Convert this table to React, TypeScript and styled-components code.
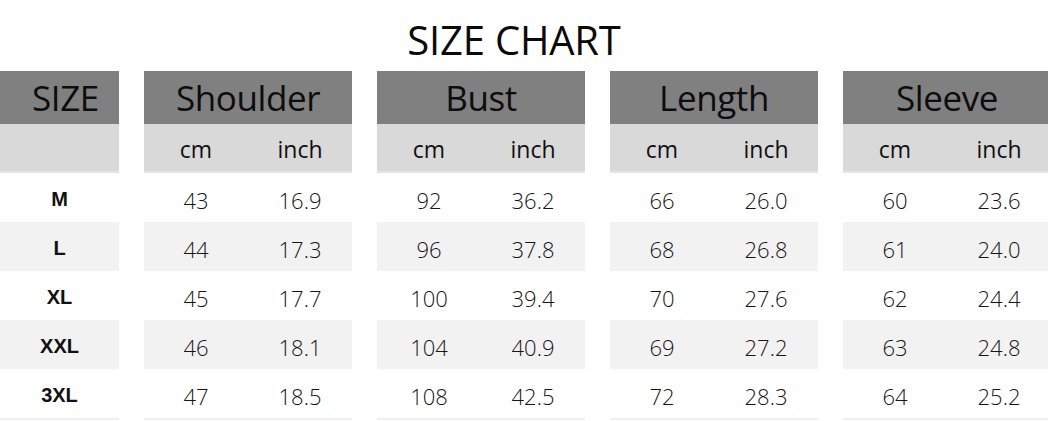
import { createGlobalStyle } from "styled-components";
import styled from "styled-components";

const GlobalStyle = createGlobalStyle`
  html, body {
    margin: 0;
    padding: 0;
    background: #ffffff;
  }
  body {
    font-family: "Open Sans", "Noto Sans", sans-serif;
    color: #111111;
  }
`;

const Page = styled.div`
  width: 1048px;
  height: 421px;
  overflow: hidden;
  background: #fff;
`;

const Title = styled.h1`
  margin: 0;
  height: 71px;
  box-sizing: border-box;
  padding: 14px 20px 0 0;
  text-align: center;
  font-size: 40px;
  font-weight: 400;
  line-height: 52px;
  color: #0a0a0a;
  letter-spacing: -0.2px;
`;

const Table = styled.div`
  display: flex;
  gap: 25px;
`;

const Group = styled.div<{ $width: number }>`
  flex: 0 0 ${({ $width }) => $width}px;
  display: flex;
  flex-direction: column;
`;

const HeadCell = styled.div<{ $shift?: number }>`
  height: 53px;
  background: #808080;
  display: flex;
  align-items: center;
  justify-content: center;
  padding-left: ${({ $shift }) => $shift ?? 0}px;
  font-size: 35px;
  font-weight: 400;
  color: #0d0d0d;
  letter-spacing: -0.4px;
`;

const Row = styled.div<{ $tone: "sub" | "white" | "light" }>`
  height: 49px;
  box-sizing: border-box;
  display: grid;
  grid-template-columns: 1fr 1fr;
  align-items: center;
  padding-top: ${({ $tone }) => ($tone === "sub" ? 2 : 4)}px;
  background: ${({ $tone }) =>
    $tone === "sub" ? "#d9d9d9" : $tone === "light" ? "#f2f2f2" : "#ffffff"};
  border-bottom: ${({ $tone }) => ($tone === "sub" ? "2px solid #e4e4e4" : "none")};
`;

const SizeRow = styled(Row)`
  grid-template-columns: 1fr;
`;

const Unit = styled.span`
  text-align: center;
  font-size: 23px;
  font-weight: 400;
  color: #111;
`;

const Value = styled.span`
  text-align: center;
  font-size: 22px;
  font-weight: 300;
  color: #151515;
`;

const SizeLabel = styled.span`
  text-align: center;
  font-family: "Liberation Sans", Arial, sans-serif;
  font-weight: 700;
  font-size: 20px;
  color: #111;
`;

const BottomLine = styled.div`
  height: 2px;
  background: #f0f0f0;
`;

const sizes = ["M", "L", "XL", "XXL", "3XL"];

const measures: { name: string; cm: string[]; inch: string[] }[] = [
  { name: "Shoulder", cm: ["43", "44", "45", "46", "47"], inch: ["16.9", "17.3", "17.7", "18.1", "18.5"] },
  { name: "Bust", cm: ["92", "96", "100", "104", "108"], inch: ["36.2", "37.8", "39.4", "40.9", "42.5"] },
  { name: "Length", cm: ["66", "68", "70", "69", "72"], inch: ["26.0", "26.8", "27.6", "27.2", "28.3"] },
  { name: "Sleeve", cm: ["60", "61", "62", "63", "64"], inch: ["23.6", "24.0", "24.4", "24.8", "25.2"] },
];

const tone = (i: number) => (i % 2 === 1 ? "light" : "white");

export default function App() {
  return (
    <Page>
      <GlobalStyle />
      <Title>SIZE CHART</Title>
      <Table>
        <Group $width={119}>
          <HeadCell $shift={12}>SIZE</HeadCell>
          <SizeRow $tone="sub" />
          {sizes.map((s, i) => (
            <SizeRow key={s} $tone={tone(i)}>
              <SizeLabel>{s}</SizeLabel>
            </SizeRow>
          ))}
          <BottomLine />
        </Group>
        {measures.map((m) => (
          <Group key={m.name} $width={208}>
            <HeadCell>{m.name}</HeadCell>
            <Row $tone="sub">
              <Unit>cm</Unit>
              <Unit>inch</Unit>
            </Row>
            {m.cm.map((c, i) => (
              <Row key={i} $tone={tone(i)}>
                <Value>{c}</Value>
                <Value>{m.inch[i]}</Value>
              </Row>
            ))}
            <BottomLine />
          </Group>
        ))}
      </Table>
    </Page>
  );
}
